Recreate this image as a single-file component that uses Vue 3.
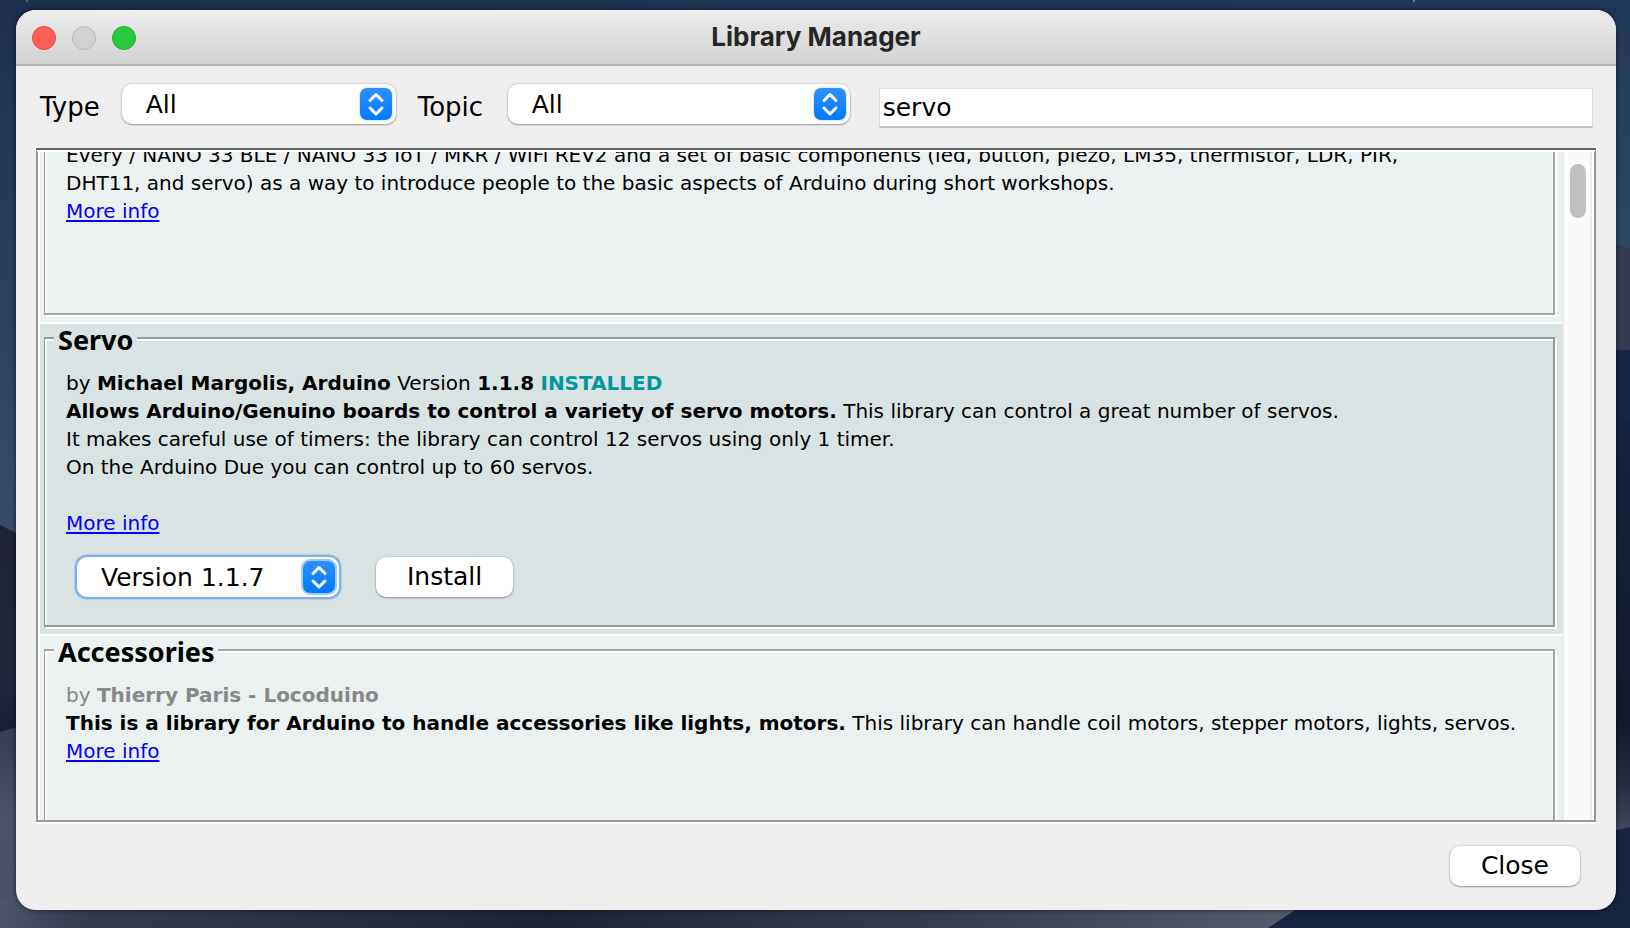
<script setup>
import { ref } from 'vue'

const type = ref('All')
const topic = ref('All')
const query = ref('servo')
const version = ref('Version 1.1.7')
</script>

<template>
  <div class="desktop">
    <svg class="wallpaper" viewBox="0 0 1630 928" preserveAspectRatio="none" aria-hidden="true">
      <defs>
        <linearGradient id="sky" x1="0" y1="0" x2="0" y2="1">
          <stop offset="0" stop-color="#1c2e4b" />
          <stop offset="0.5" stop-color="#344b67" />
          <stop offset="1" stop-color="#3b516b" />
        </linearGradient>
        <linearGradient id="ridge" x1="0" y1="0" x2="0" y2="1">
          <stop offset="0" stop-color="#202338" />
          <stop offset="0.7" stop-color="#20263b" />
          <stop offset="1" stop-color="#0f1a30" />
        </linearGradient>
        <linearGradient id="dune" x1="0" y1="0" x2="0" y2="1">
          <stop offset="0" stop-color="#2f3549" />
          <stop offset="0.5" stop-color="#4b5167" />
          <stop offset="1" stop-color="#4a5168" />
        </linearGradient>
        <linearGradient id="sand" x1="0" y1="0" x2="1" y2="0">
          <stop offset="0" stop-color="#4d556c" />
          <stop offset="0.06" stop-color="#343c50" />
          <stop offset="0.22" stop-color="#293044" />
          <stop offset="0.42" stop-color="#1c2334" />
          <stop offset="0.7" stop-color="#333b4c" />
          <stop offset="1" stop-color="#555c6e" />
        </linearGradient>
        <linearGradient id="skyRight" x1="0" y1="0" x2="0" y2="1">
          <stop offset="0" stop-color="#20375a" />
          <stop offset="1" stop-color="#304966" />
        </linearGradient>
        <linearGradient id="skyTop" x1="0" y1="0" x2="1" y2="0">
          <stop offset="0" stop-color="#1c2e4b" />
          <stop offset="1" stop-color="#20375a" />
        </linearGradient>
        <linearGradient id="cliff" x1="0" y1="0" x2="0" y2="1">
          <stop offset="0" stop-color="#15233f" />
          <stop offset="0.75" stop-color="#131a2d" />
          <stop offset="0.9" stop-color="#262d42" />
          <stop offset="1" stop-color="#444a5e" />
        </linearGradient>
      </defs>
      <rect width="1630" height="928" fill="url(#sky)" />
      <rect x="815" width="815" height="260" fill="url(#skyRight)" />
      <rect width="1630" height="14" fill="url(#skyTop)" />
      <path d="M0 525 L20 535 L300 600 V760 H0 Z" fill="url(#ridge)" />
      <path d="M0 732 L20 726 L300 700 V928 H0 Z" fill="url(#dune)" />
      <rect y="900" width="1304" height="28" fill="url(#sand)" />
      <path d="M1500 230 L1616 245 L1630 248 V352 H1500 Z" fill="#343a50" />
      <path d="M1500 350 H1630 V422 L1500 400 Z" fill="#142548" />
      <path d="M1500 400 L1616 417 L1630 422 V830 H1500 Z" fill="url(#cliff)" />
      <path d="M1310 900 L1630 827 V928 H1268 Z" fill="#16243f" />
      <circle cx="27" cy="1" r="1" fill="#62718c" />
      <circle cx="1414" cy="1" r="1" fill="#7f93ae" />
    </svg>

    <main class="window">
      <header class="titlebar">
        <div class="lights">
          <button class="light red" type="button" aria-label="Close window"></button>
          <button class="light grey" type="button" aria-label="Minimize window" disabled></button>
          <button class="light green" type="button" aria-label="Zoom window"></button>
        </div>
        <h1 class="title">Library Manager</h1>
      </header>

      <div class="toolbar">
        <label class="label" for="type">Type</label>
        <div class="popup type">
          <select id="type" v-model="type">
            <option>All</option>
          </select>
          <svg class="arrows" viewBox="0 0 32 32" aria-hidden="true">
            <path d="M10 12.5 L16 6.5 L22 12.5 M10 20 L16 26 L22 20" />
          </svg>
        </div>
        <label class="label wide" for="topic">Topic</label>
        <div class="popup topic">
          <select id="topic" v-model="topic">
            <option>All</option>
          </select>
          <svg class="arrows" viewBox="0 0 32 32" aria-hidden="true">
            <path d="M10 12.5 L16 6.5 L22 12.5 M10 20 L16 26 L22 20" />
          </svg>
        </div>
        <input v-model="query" class="search" type="text" aria-label="Search libraries" />
      </div>

      <section class="pane">
        <div class="viewport">
          <div class="list">
            <article class="item partial">
              <div class="frame">
                <div class="text">
                  Every / NANO 33 BLE / NANO 33 IoT / MKR / WiFi REV2 and a set of basic components (led, button, piezo, LM35, thermistor, LDR, PIR,<br />
                  DHT11, and servo) as a way to introduce people to the basic aspects of Arduino during short workshops.<br />
                  <a href="#">More info</a>
                </div>
              </div>
            </article>

            <article class="item selected">
              <fieldset class="frame">
                <legend>Servo</legend>
                <div class="text">
                  by <b>Michael Margolis, Arduino</b> Version <b>1.1.8</b> <b class="installed">INSTALLED</b><br />
                  <b>Allows Arduino/Genuino boards to control a variety of servo motors.</b> This library can control a great number of servos.<br />
                  It makes careful use of timers: the library can control 12 servos using only 1 timer.<br />
                  On the Arduino Due you can control up to 60 servos.<br />
                  <br />
                  <a href="#">More info</a>
                </div>
                <div class="actions">
                  <div class="popup version focused">
                    <select v-model="version" aria-label="Version">
                      <option>Version 1.1.7</option>
                    </select>
                    <svg class="arrows" viewBox="0 0 32 32" aria-hidden="true">
                      <path d="M10 12.5 L16 6.5 L22 12.5 M10 20 L16 26 L22 20" />
                    </svg>
                  </div>
                  <button class="push install" type="button">Install</button>
                </div>
              </fieldset>
            </article>

            <article class="item">
              <fieldset class="frame">
                <legend>Accessories</legend>
                <div class="text">
                  <span class="muted">by <b>Thierry Paris - Locoduino</b></span><br />
                  <b>This is a library for Arduino to handle accessories like lights, motors.</b> This library can handle coil motors, stepper motors, lights, servos.<br />
                  <a href="#">More info</a>
                </div>
              </fieldset>
            </article>
          </div>
          <div class="track"><div class="thumb"></div></div>
        </div>
      </section>

      <footer class="footer">
        <button class="push" type="button">Close</button>
      </footer>
    </main>
  </div>
</template>

<style>
body {
  margin: 0;
  background: #1c2e4b;
}
</style>

<style scoped>
* {
  box-sizing: border-box;
}

.desktop {
  position: relative;
  display: flex;
  height: 100vh;
  padding: 10px 14px 18px 16px;
  overflow: hidden;
  font-family: "DejaVu Sans", Verdana, sans-serif;
  font-size: 25px;
  color: #000;
}

.wallpaper {
  position: absolute;
  inset: 0;
  width: 100%;
  height: 100%;
}

.window {
  position: relative;
  display: flex;
  flex: 1;
  flex-direction: column;
  min-width: 0;
  overflow: hidden;
  border-radius: 20px;
  background: #eeeeee;
  box-shadow: 0 0 5px rgba(0, 0, 0, 0.6);
}

.titlebar {
  display: grid;
  grid-template-columns: 1fr auto 1fr;
  align-items: center;
  height: 56px;
  padding: 0 16px;
  border-bottom: 2px solid #b4b4b4;
  background: linear-gradient(#ececec, #d3d3d3);
  box-shadow: inset 0 1px 0 #f8f8f8;
}

.lights {
  display: flex;
  gap: 16px;
  padding-top: 2px;
}

.light {
  width: 24px;
  height: 24px;
  padding: 0;
  border: 1px solid;
  border-radius: 50%;
}

.red {
  border-color: #e2463f;
  background: #ff5f57;
}

.grey {
  border-color: #b9b9b9;
  background: #d2d2d2;
}

.green {
  border-color: #1dad2b;
  background: #28c940;
}

.title {
  margin: 0;
  font: 700 26px/32px Inter, sans-serif;
  color: #262626;
}

.toolbar {
  display: flex;
  gap: 22px;
  height: 82px;
  padding: 18px 23px 20px 24px;
}

.label {
  align-self: center;
  min-width: 58px;
  padding-top: 2px;
  font-size: 26px;
  line-height: 30px;
}

.wide {
  min-width: 68px;
}

.popup {
  position: relative;
  height: 40px;
  border-radius: 10px;
  background: #fff;
  box-shadow: 0 0 1px 1px rgba(0, 0, 0, 0.08), 0 1px 2px rgba(0, 0, 0, 0.3);
}

.popup select {
  width: 100%;
  height: 40px;
  padding: 0 40px 0 24px;
  border: 0;
  border-radius: 10px;
  outline: 0;
  appearance: none;
  background: transparent;
  font: inherit;
  color: inherit;
}

.arrows {
  position: absolute;
  top: 4px;
  right: 4px;
  width: 32px;
  height: 32px;
  border-radius: 7px;
  background: linear-gradient(#2f90ff, #007aff);
  box-shadow: 0 0 2px rgba(0, 122, 255, 0.5);
  pointer-events: none;
}

.arrows path {
  fill: none;
  stroke: #fff;
  stroke-width: 3;
  stroke-linecap: round;
  stroke-linejoin: round;
}

.type {
  width: 274px;
}

.topic {
  width: 342px;
}

.version {
  width: 262px;
}

.focused {
  box-shadow: 0 0 0 2px #7db0e8, 0 0 1px 3px #b5d0ea;
}

.focused .arrows {
  box-shadow: 0 0 0 2px #9ecaff;
}

.search {
  flex: 1;
  align-self: flex-end;
  min-width: 0;
  height: 40px;
  margin-left: 7px;
  padding: 0 3px;
  border: 1px solid #dcdcdc;
  border-bottom: 2px solid #bcbcbc;
  border-radius: 0;
  outline: 0;
  background: #fff;
  font: inherit;
  color: inherit;
}

.pane {
  display: flex;
  flex: 1;
  min-height: 0;
  margin: 0 20px;
  border-top: 2px solid #666;
  border-bottom: 2px solid #fff;
}

.viewport {
  display: flex;
  flex: 1;
  min-width: 0;
  overflow: hidden;
  border: 2px solid #999;
  border-top-color: #fff;
}

.list {
  flex: 1;
  min-width: 0;
  margin-top: -11px;
  border-left: 2px solid #fff;
}

.item {
  display: flex;
  min-height: 312px;
  padding: 1px 7px 7px 4px;
  border-top: 2px solid #fff;
  background: #ebf1f1;
}

.frame {
  flex: 1;
  min-width: 0;
  margin: 0;
  padding: 18px 21px 28px;
  border: 2px solid #a0a5a5;
  border-left-width: 1px;
  box-shadow: inset 2px 2px 0 #fff, 2px 2px 0 #fff;
}

.selected {
  background: #dae3e3;
}

.selected .frame {
  border-color: #949a9a;
}

.partial {
  min-height: 181px;
  padding-top: 0;
  border-top: 0;
}

.partial .frame {
  padding-top: 0;
  border-top: 0;
  box-shadow: inset 2px 0 0 #fff, 2px 2px 0 #fff;
}

legend {
  margin-left: -12px;
  padding: 4px 4px 0;
  background: #ebf1f1;
  font: 700 27px/22px "Noto Sans", sans-serif;
}

.selected legend {
  background: #dae3e3;
}

.text {
  font-size: 20px;
  line-height: 28px;
  white-space: nowrap;
}

.text a {
  color: #0000ff;
  text-decoration-thickness: 2px;
  text-underline-offset: 2px;
}

.installed {
  color: #00979d;
}

.muted {
  color: #888;
}

.actions {
  display: flex;
  gap: 37px;
  margin: 20px 0 0 11px;
}

.push {
  height: 40px;
  padding: 0 31px 2px;
  border: 0;
  border-radius: 10px;
  background: #fff;
  box-shadow: 0 0 1px 1px rgba(0, 0, 0, 0.08), 0 1px 2px rgba(0, 0, 0, 0.3);
  font: inherit;
  color: inherit;
}

.track {
  width: 32px;
  padding: 12px 6px;
  border-right: 2px solid #fff;
  border-left: 2px solid #e9e9e9;
  background: #fafafa;
  box-shadow: inset -2px 0 0 #ececec;
}

.thumb {
  width: 16px;
  height: 54px;
  border-radius: 8px;
  background: #c1c1c1;
}

.footer {
  display: flex;
  justify-content: flex-end;
  padding: 22px 36px 24px;
}
</style>
